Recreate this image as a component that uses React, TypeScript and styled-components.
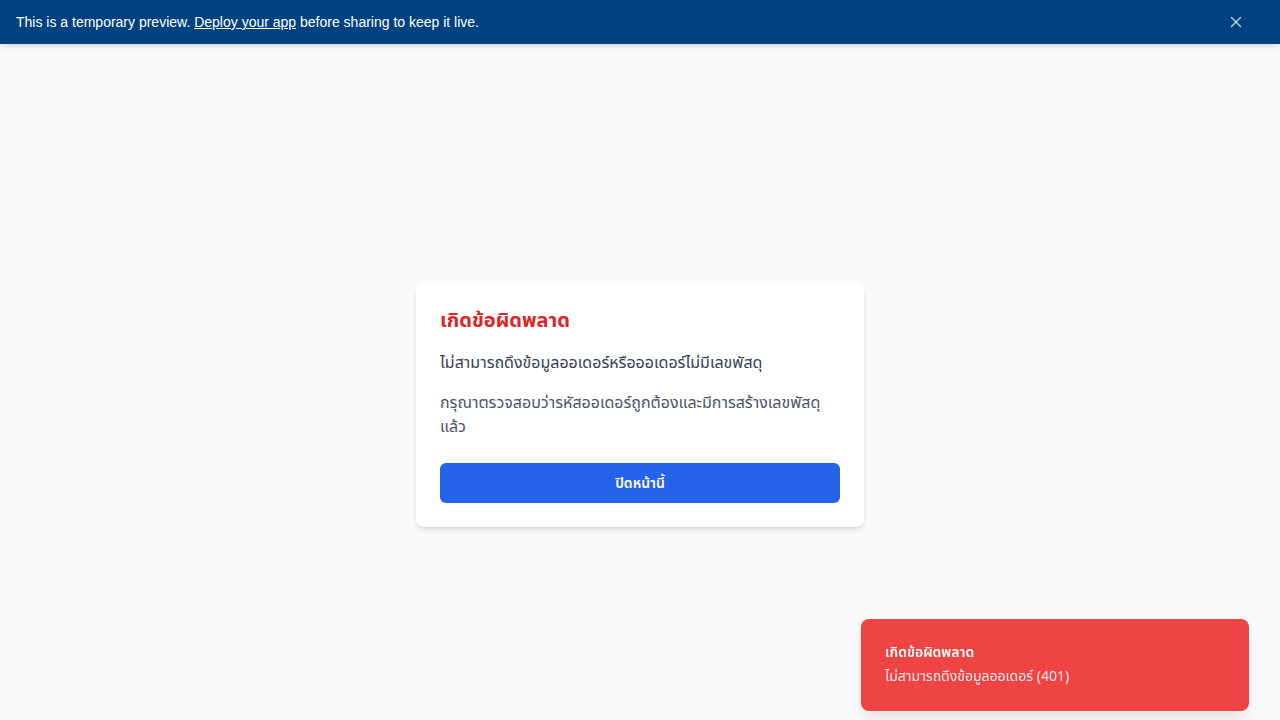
import styled, { createGlobalStyle } from 'styled-components';
import { X } from 'lucide-react';

const GlobalStyle = createGlobalStyle`
    html, body {
        margin: 0;
        padding: 0;
        background: #f9fafb;
    }
    body {
        font-family: "Noto Sans Thai", "Noto Sans", "DejaVu Sans", sans-serif;
    }
    * {
        box-sizing: border-box;
    }
`;

// Preview banner (in flow, full viewport width)
const Banner = styled.div`
    width: 100vw;
    height: 44px;
    background: #00417f;
    color: #ffffff;
    display: flex;
    align-items: center;
    justify-content: space-between;
    padding: 0 16px;
    font-family: "Liberation Sans", Arial, sans-serif;
    font-size: 14px;
    box-shadow: 0 2px 6px rgba(0, 0, 0, 0.14);
    position: relative;
    z-index: 1;
`;

const BannerLink = styled.a`
    color: #ffffff;
    text-decoration: underline;
`;

const CloseButton = styled.button`
    display: flex;
    align-items: center;
    justify-content: center;
    width: 28px;
    height: 28px;
    margin-right: 14px;
    padding: 0;
    border: none;
    background: transparent;
    color: rgba(255, 255, 255, 0.7);
    cursor: pointer;
`;

const Page = styled.main`
    width: 100vw;
    min-height: 100vh;
    display: flex;
    align-items: center;
    justify-content: center;
    padding: 18px 16px 16px;
`;

const Card = styled.div`
    width: 448px;
    background: #ffffff;
    border-radius: 8px;
    box-shadow: 0 4px 6px -1px rgba(0, 0, 0, 0.1), 0 2px 4px -2px rgba(0, 0, 0, 0.1);
    padding: 24px;
`;

const Title = styled.h2`
    margin: 0 0 16px 0;
    font-size: 20px;
    line-height: 28px;
    font-weight: 700;
    color: #dc2626;
`;

const Text = styled.p<{ $muted?: boolean }>`
    margin: 0 0 16px 0;
    font-size: 16px;
    line-height: 24px;
    color: ${props => props.$muted ? '#4b5563' : '#374151'};
`;

const PrimaryButton = styled.button`
    width: 100%;
    height: 40px;
    margin-top: 8px;
    border: none;
    border-radius: 6px;
    background: #2563eb;
    color: #ffffff;
    font-family: inherit;
    font-size: 14px;
    font-weight: 600;
    cursor: pointer;
`;

// Toast sits over the page in the bottom-right corner
const Toast = styled.div`
    position: fixed;
    right: 31px;
    bottom: 9px;
    width: 388px;
    background: #ef4444;
    color: #ffffff;
    border-radius: 8px;
    padding: 24px;
    box-shadow: 0 10px 15px -3px rgba(0, 0, 0, 0.1);
`;

const ToastTitle = styled.div`
    font-size: 14px;
    line-height: 20px;
    font-weight: 600;
    margin-bottom: 4px;
`;

const ToastText = styled.div`
    font-size: 14px;
    line-height: 20px;
    opacity: 0.9;
`;

export default function App() {
    return (
        <>
            <GlobalStyle />
            <Banner>
                <span>
                    This is a temporary preview. <BannerLink href="#">Deploy your app</BannerLink> before sharing to keep it live.
                </span>
                <CloseButton aria-label="close">
                    <X size={18} strokeWidth={2} />
                </CloseButton>
            </Banner>

            <Page>
                <Card>
                    <Title>เกิดข้อผิดพลาด</Title>
                    <Text>ไม่สามารถดึงข้อมูลออเดอร์หรือออเดอร์ไม่มีเลขพัสดุ</Text>
                    <Text $muted>กรุณาตรวจสอบว่ารหัสออเดอร์ถูกต้องและมีการสร้างเลขพัสดุแล้ว</Text>
                    <PrimaryButton>ปิดหน้านี้</PrimaryButton>
                </Card>
            </Page>

            <Toast>
                <ToastTitle>เกิดข้อผิดพลาด</ToastTitle>
                <ToastText>ไม่สามารถดึงข้อมูลออเดอร์ (401)</ToastText>
            </Toast>
        </>
    );
}
